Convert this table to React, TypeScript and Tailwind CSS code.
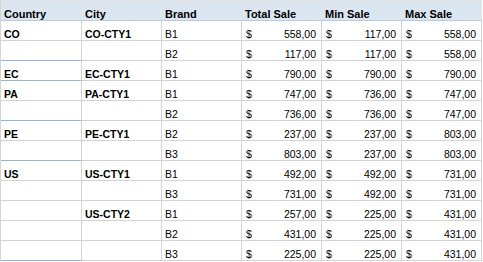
type Row = {
  country: string
  city: string
  brand: string
  total: string
  min: string
  max: string
  groupEnd?: boolean
}

const ROWS: Row[] = [
  { country: 'CO', city: 'CO-CTY1', brand: 'B1', total: '558,00', min: '117,00', max: '558,00' },
  { country: '', city: '', brand: 'B2', total: '117,00', min: '117,00', max: '558,00', groupEnd: true },
  { country: 'EC', city: 'EC-CTY1', brand: 'B1', total: '790,00', min: '790,00', max: '790,00', groupEnd: true },
  { country: 'PA', city: 'PA-CTY1', brand: 'B1', total: '747,00', min: '736,00', max: '747,00' },
  { country: '', city: '', brand: 'B2', total: '736,00', min: '736,00', max: '747,00', groupEnd: true },
  { country: 'PE', city: 'PE-CTY1', brand: 'B2', total: '237,00', min: '237,00', max: '803,00' },
  { country: '', city: '', brand: 'B3', total: '803,00', min: '237,00', max: '803,00', groupEnd: true },
  { country: 'US', city: 'US-CTY1', brand: 'B1', total: '492,00', min: '492,00', max: '731,00' },
  { country: '', city: '', brand: 'B3', total: '731,00', min: '492,00', max: '731,00' },
  { country: '', city: 'US-CTY2', brand: 'B1', total: '257,00', min: '225,00', max: '431,00' },
  { country: '', city: '', brand: 'B2', total: '431,00', min: '225,00', max: '431,00' },
  { country: '', city: '', brand: 'B3', total: '225,00', min: '225,00', max: '431,00', groupEnd: true },
]

const HEADERS = ['Country', 'City', 'Brand', 'Total Sale', 'Min Sale', 'Max Sale']

function Money({ value }: { value: string }) {
  return (
    <div className="w-[80px] h-[20px] flex items-end justify-between pl-[4px] pr-[5px] border-r border-b border-[#d4d4d4] font-['Liberation_Sans',sans-serif] text-[10.5px] leading-[12px]">
      <span>$</span>
      <span>{value}</span>
    </div>
  )
}

export default function App() {
  return (
    <div className="w-[483px] h-[262px] bg-white text-black overflow-hidden">
      <div className="w-[482px] border-l border-[#d4d4d4]">
        {/* header row */}
        <div className="flex h-[21px] border-t border-[#e0e0e0] bg-[#dce6f1] border-b border-b-[#b8cce4] font-['Liberation_Sans_Narrow','Liberation_Sans',sans-serif] font-bold text-[11px] leading-[12px]">
          {HEADERS.map((h, i) => (
            <div key={h} className={`${i === 0 ? 'w-[81px]' : 'w-[80px]'} flex items-end pl-[3px]`}>
              {h}
            </div>
          ))}
        </div>
        {ROWS.map((r, i) => (
          <div key={i} className="flex">
            <div
              className={`w-[81px] h-[20px] flex items-end pl-[3px] border-r border-b border-r-[#d4d4d4] font-['Liberation_Sans_Narrow','Liberation_Sans',sans-serif] font-bold text-[10.5px] leading-[12px] ${
                r.groupEnd ? 'border-b-[#95b3d7]' : 'border-b-[#d4d4d4]'
              }`}
            >
              {r.country}
            </div>
            <div className="w-[80px] h-[20px] flex items-end pl-[3px] border-r border-b border-[#d4d4d4] font-['Liberation_Sans_Narrow','Liberation_Sans',sans-serif] font-bold text-[10.5px] leading-[12px]">
              {r.city}
            </div>
            <div className="w-[80px] h-[20px] flex items-end pl-[3px] border-r border-b border-[#d4d4d4] font-['Liberation_Sans',sans-serif] text-[10.5px] leading-[12px]">
              {r.brand}
            </div>
            <Money value={r.total} />
            <Money value={r.min} />
            <Money value={r.max} />
          </div>
        ))}
      </div>
    </div>
  )
}
